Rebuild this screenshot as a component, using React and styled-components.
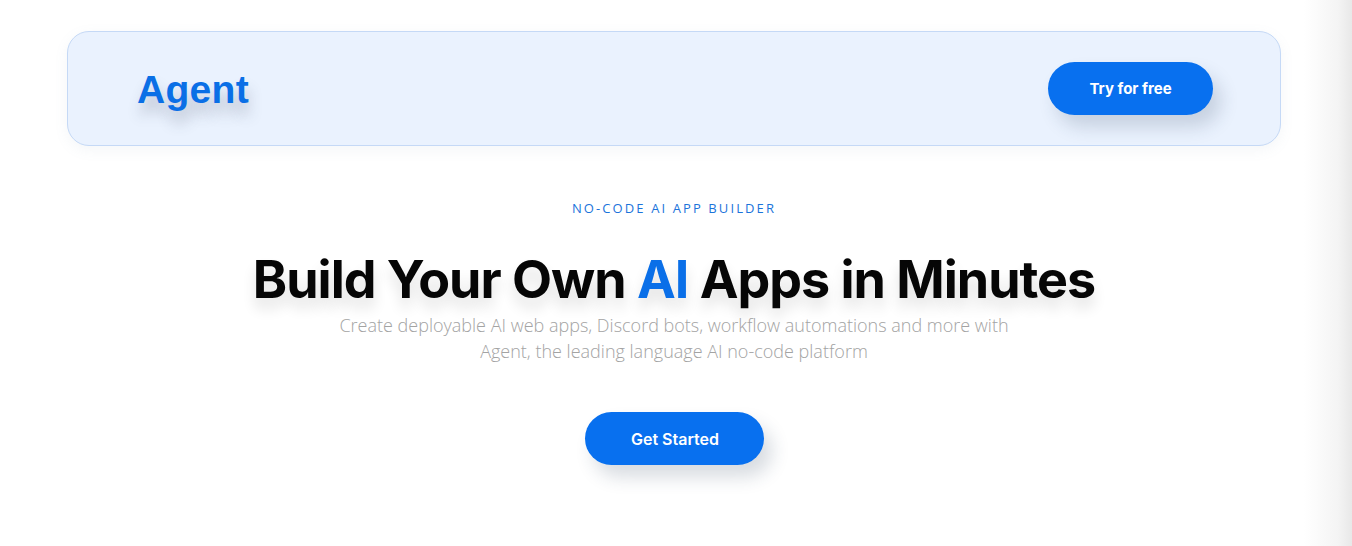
import styled, { createGlobalStyle } from "styled-components";

const GlobalStyle = createGlobalStyle`
  html, body {
    margin: 0;
    padding: 0;
  }
  body {
    min-height: 546px;
    background: linear-gradient(to right, #ffffff calc(100% - 48px), #f4f4f4 calc(100% - 14px), #e8e8e8);
    font-family: "Inter", "Noto Sans", sans-serif;
  }
`;

const Page = styled.div`
  display: flex;
  flex-direction: column;
  align-items: center;
  padding: 31px 4px 0 0;
`;

const Header = styled.header`
  box-sizing: border-box;
  width: 1214px;
  height: 115px;
  display: flex;
  align-items: center;
  justify-content: space-between;
  padding: 0 67px 0 69px;
  background: #eaf2fe;
  border: 1px solid #c5d9f6;
  border-radius: 22px;
  box-shadow: 0 4px 14px rgba(120, 140, 170, 0.08);
`;

const Logo = styled.div`
  font-family: "Liberation Sans", Arial, sans-serif;
  font-weight: 700;
  font-size: 39px;
  letter-spacing: 0.3px;
  color: #0a6fe6;
  text-shadow: 2px 12px 14px rgba(60, 70, 90, 0.28);
  margin-top: 3px;
`;

const Button = styled.button`
  border: none;
  border-radius: 999px;
  background: #0870ef;
  color: #fff;
  font-family: "Inter", sans-serif;
  font-weight: ${(p) => (p.$big ? 600 : 700)};
  font-size: ${(p) => (p.$big ? "16px" : "15px")};
  width: ${(p) => p.$w}px;
  height: 53px;
  box-shadow: 8px 12px 18px rgba(40, 60, 90, 0.18);
  cursor: pointer;
`;

const Hero = styled.section`
  display: flex;
  flex-direction: column;
  align-items: center;
  text-align: center;
`;

const Tag = styled.div`
  margin-top: 53px;
  font-family: "Open Sans", sans-serif;
  font-size: 13px;
  letter-spacing: 2.1px;
  color: #1b74db;
`;

const Title = styled.h1`
  margin: 32px 0 0;
  font-family: "Inter", sans-serif;
  font-weight: 700;
  font-size: 52px;
  line-height: 62px;
  letter-spacing: -1px;
  color: #060606;
  text-shadow: 0 10px 14px rgba(0, 0, 0, 0.12);
`;

const Accent = styled.span`
  color: #0a6fe8;
`;

const Subtitle = styled.p`
  margin: 1px 0 0;
  width: 700px;
  font-family: "Open Sans", sans-serif;
  font-weight: 300;
  font-size: 18px;
  line-height: 26px;
  color: #a3a3a3;
`;

const Actions = styled.div`
  margin-top: 48px;
  padding-left: 2px;
`;

export default function App() {
  return (
    <>
      <GlobalStyle />
      <Page>
        <Header>
          <Logo>Agent</Logo>
          <Button $w={165}>Try for free</Button>
        </Header>
        <Hero>
          <Tag>NO-CODE AI APP BUILDER</Tag>
          <Title>
            Build Your Own <Accent>AI</Accent> Apps in Minutes
          </Title>
          <Subtitle>
            Create deployable AI web apps, Discord bots, workflow automations and more with
            Agent, the leading language AI no-code platform
          </Subtitle>
          <Actions>
            <Button $big $w={179}>Get Started</Button>
          </Actions>
        </Hero>
      </Page>
    </>
  );
}
